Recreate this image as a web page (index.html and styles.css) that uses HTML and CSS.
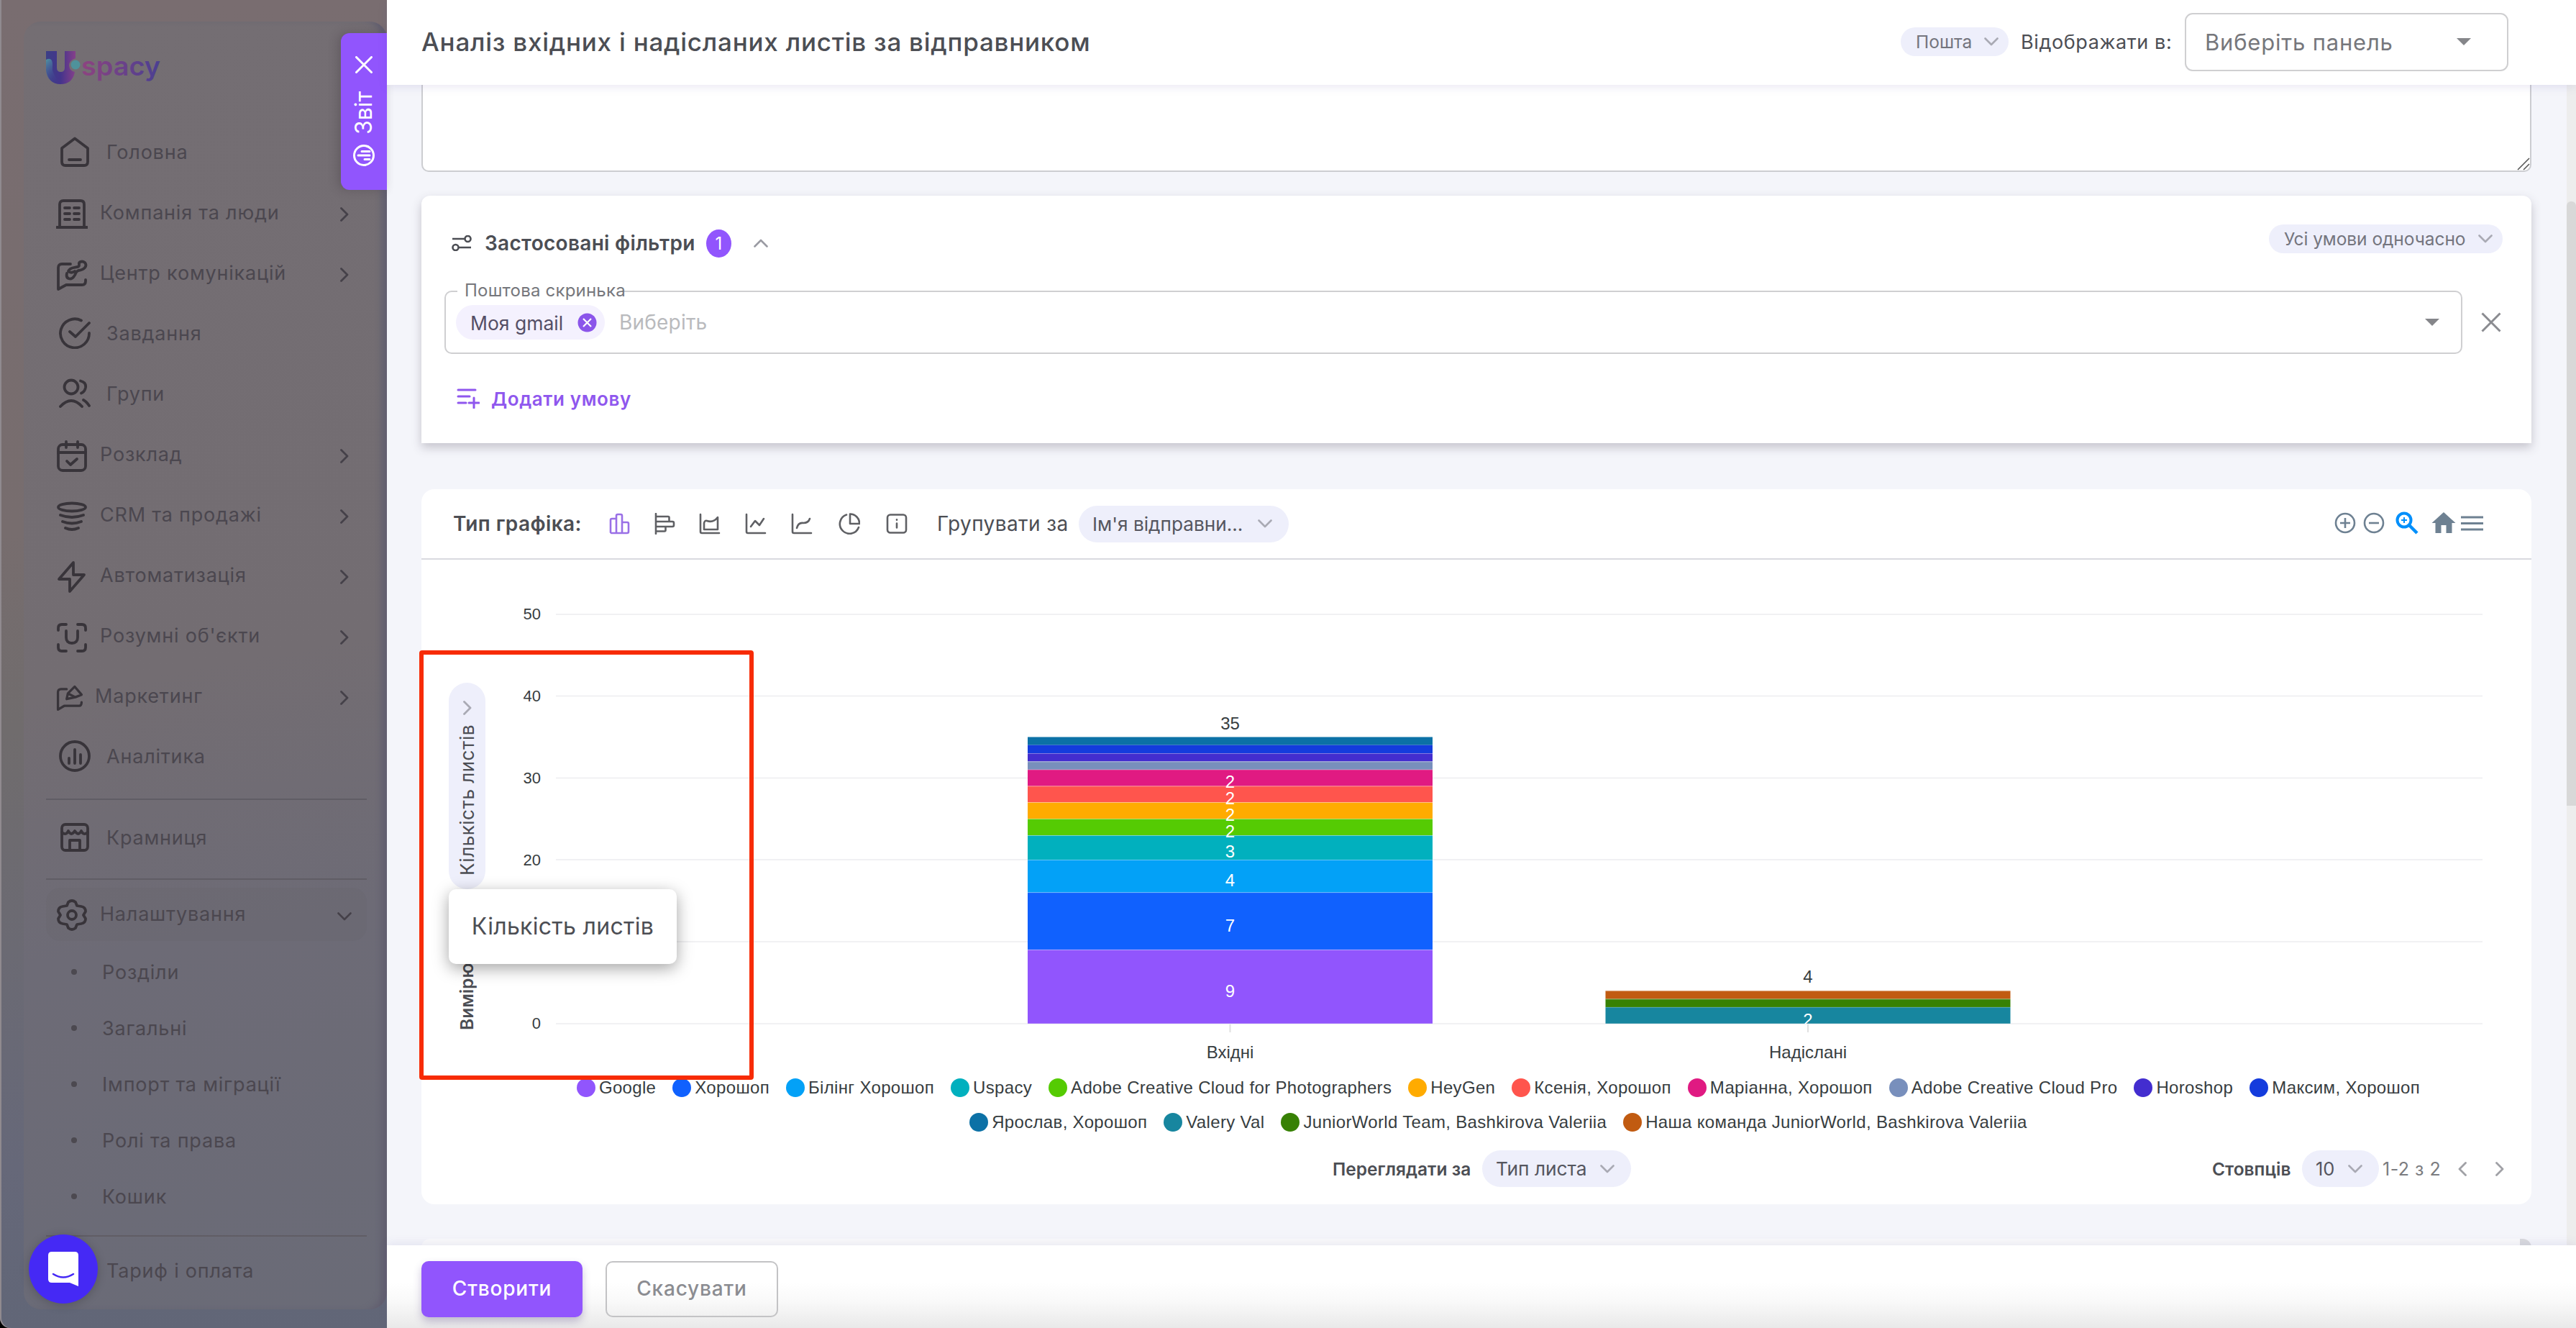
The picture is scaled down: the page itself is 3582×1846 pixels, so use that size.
FILE: index.html
```html
<!DOCTYPE html>
<html lang="uk">
<head>
<meta charset="utf-8">
<title>Аналіз вхідних і надісланих листів за відправником</title>
<link rel="stylesheet" href="styles.css">
</head>
<body>
<svg class="defs" width="0" height="0" aria-hidden="true">
  <symbol id="down" viewBox="0 0 20 12"><path d="M1.5 1.5 10 10l8.500-8.500" fill="none" stroke="currentColor" stroke-width="2.600" stroke-linecap="round" stroke-linejoin="round"/></symbol>
  <symbol id="right" viewBox="0 0 12 20"><path d="M1.500 1.500 10 10 1.500 18.500" fill="none" stroke="currentColor" stroke-width="2.800" stroke-linecap="round" stroke-linejoin="round"/></symbol>
  <symbol id="caret" viewBox="0 0 20 10"><path d="M0 0h20L10 10z" fill="currentColor"/></symbol>
</svg>

<div class="app">
  <aside class="sidebar">
    <div class="panel">
      <svg class="logo" viewBox="0 0 160 48">
        <defs>
          <linearGradient id="lu" x1="0" y1="0" x2="1" y2="0"><stop offset="0" stop-color="#3c3f86"/><stop offset=".5" stop-color="#45348c"/><stop offset="1" stop-color="#86408a"/></linearGradient>
          <linearGradient id="lc" x1="0" y1="0" x2="0.600" y2="1"><stop offset="0" stop-color="#4f95a2"/><stop offset="1" stop-color="#403c9a" stop-opacity="0"/></linearGradient>
          <linearGradient id="lt" x1="0" y1="0" x2="1" y2="0"><stop offset="0" stop-color="#8e4380"/><stop offset="1" stop-color="#4a3f92"/></linearGradient>
        </defs>
        <path d="M0 0h15v23q0 6 5.500 6t5.500-6V0h15v10q-9 3-9 10 1 8 8 9-3 17-20 17T0 26z" fill="url(#lu)"/>
        <path d="M0 12q8-4 9 5v10q3 10 12 18Q0 45 0 26z" fill="url(#lc)"/>
        <circle cx="41" cy="19" r="6.500" fill="#4f929b"/>
        <text x="49" y="34" class="logo-text" fill="url(#lt)" textLength="110" lengthAdjust="spacingAndGlyphs">spacy</text>
      </svg>

      <nav class="nav">
        <a class="item"><svg class="ico" viewBox="0 0 44 44"><path d="M4 17 22 3.500 40 17v19q0 5-5 5H9q-5 0-5-5zM14 33h16"/></svg><span>Головна</span></a>
        <a class="item sub"><svg class="ico" viewBox="0 0 44 44"><path d="M1 40h42M5 39V8q0-5 5-5h24q5 0 5 5v31M12 13h7M25 13h7M12 21h7M25 21h7M12 29h7M25 29h7"/></svg><span>Компанія та люди</span><svg class="arr"><use href="#right"/></svg></a>
        <a class="item sub"><svg class="ico" viewBox="0 0 44 44"><path d="M20 7H8q-5 0-5 5v30l11-6h22q5 0 5-5v-2M15 20c-2 8 6 10 10 4 3-3 1-6 6-8 8-1 13-6 9-11-4-3-9-1-8 3 1 6-12 1-15 9 3 3 6 2 9 0"/></svg><span>Центр комунікацій</span><svg class="arr"><use href="#right"/></svg></a>
        <a class="item"><svg class="ico" viewBox="0 0 44 44"><path d="M31 4.500A20 20 0 1 0 42 22M15 20l8 7L42 8"/></svg><span>Завдання</span></a>
        <a class="item"><svg class="ico" viewBox="0 0 44 44"><circle cx="17" cy="13" r="9.500"/><path d="M2 40q15-16 30 0M30 4.500q8 2 7 9-1 6-6 8M34 31q4 2 8 8"/></svg><span>Групи</span></a>
        <a class="item sub"><svg class="ico" viewBox="0 0 44 44"><rect x="3" y="6" width="38" height="36" rx="6"/><path d="M3 17h38M14 2v8M30 2v8M15 29l5 5 9-8"/></svg><span>Розклад</span><svg class="arr"><use href="#right"/></svg></a>
        <a class="item sub"><svg class="ico" viewBox="0 0 44 44"><ellipse cx="22" cy="9" rx="19" ry="5.500"/><path d="M6 20q16 6 32 0M9 29q13 5 26 0M13 38q9 4 18 0"/></svg><span>CRM та продажі</span><svg class="arr"><use href="#right"/></svg></a>
        <a class="item sub"><svg class="ico" viewBox="0 0 44 44"><path d="M24 2 4 25h15v17L39 19H24z"/></svg><span>Автоматизація</span><svg class="arr"><use href="#right"/></svg></a>
        <a class="item sub"><svg class="ico" viewBox="0 0 44 44"><path d="M3 12V9q0-5 5-5h6M30 4h6q5 0 5 5v3M3 32v4q0 5 5 5h6M30 41h6q5 0 5-5v-4M14 13v9q0 8 8 8t8-8v-9"/></svg><span>Розумні об'єкти</span><svg class="arr"><use href="#right"/></svg></a>
        <a class="item sub mk"><svg class="ico" viewBox="0 0 44 44"><path d="M17 8H8q-5 0-5 5v28l10-6h24q4 0 4-6M17 24l2-9L30 4l11 13-10 4zM19 15l12 6"/></svg><span>Маркетинг</span><svg class="arr"><use href="#right"/></svg></a>
        <a class="item"><svg class="ico" viewBox="0 0 44 44"><circle cx="22" cy="22" r="20"/><path d="M14 25v7M22 13v19M30 20v12"/></svg><span>Аналітика</span></a>
        <hr class="h1">
        <a class="item"><svg class="ico" viewBox="0 0 44 44"><rect x="4" y="4" width="36" height="36" rx="5"/><path d="M4 15q6 5 9-2 4 8 9 0 5 8 9 0 3 7 9 2M15 39V26h14v13"/></svg><span>Крамниця</span></a>
        <hr class="h2">
        <a class="item sub open"><svg class="ico" viewBox="0 0 44 44"><path d="M17 4q5-4 10 0l2 5 6 1q6 1 6 7l-3 5 3 5q0 6-6 7l-6 1-2 5q-5 4-10 0l-2-5-6-1q-6-1-6-7l3-5-3-5q0-6 6-7l6-1z"/><circle cx="22" cy="22" r="6"/></svg><span>Налаштування</span><svg class="arr dn"><use href="#down"/></svg></a>
        <a class="leaf"><i></i>Розділи</a>
        <a class="leaf"><i></i>Загальні</a>
        <a class="leaf"><i></i>Імпорт та міграції</a>
        <a class="leaf"><i></i>Ролі та права</a>
        <a class="leaf"><i></i>Кошик</a>
        <hr class="h3">
        <a class="item last"><span>Тариф і оплата</span></a>
      </nav>
    </div>
    <div class="tab">
      <svg width="24" height="24" viewBox="0 0 24 24"><path d="M1.500 1.500l21 21M22.500 1.500l-21 21"/></svg>
      <span>Звіт</span>
      <svg width="30" height="30" viewBox="0 0 30 30"><circle cx="15" cy="15" r="13.500"/><path d="M12 9.500h11M7 15h16M16 20.500h7"/></svg>
    </div>
    <div class="chat"><svg width="42" height="48" viewBox="0 0 42 48"><path d="M5 0h32q5 0 5 5v43l-12-5H5q-5 0-5-5V5q0-5 5-5z" fill="#fff"/><path d="M7 31q14 9 28 0" fill="none" stroke="#4529f5" stroke-width="2.500" stroke-linecap="round"/></svg></div>
  </aside>

  <main class="drawer">
    <header class="head">
      <h1>Аналіз вхідних і надісланих листів за відправником</h1>
      <div class="chip small mail"><span>Пошта</span><svg class="cv"><use href="#down"/></svg></div>
      <span class="show">Відображати в:</span>
      <div class="select"><span>Виберіть панель</span><svg class="caret"><use href="#caret"/></svg></div>
    </header>

    <section class="scroll">
      <div class="content">
        <div class="textarea"><svg width="18" height="18" viewBox="0 0 18 18"><path d="M1 17 17 1M9 17l8-8" stroke="#555" stroke-width="1.600"/></svg></div>

        <div class="card filters">
          <div class="f-head">
            <svg class="f-ico" viewBox="0 0 28 22"><path d="M1 5h17M10 17h17"/><circle cx="22.500" cy="5" r="4"/><circle cx="5.500" cy="17" r="4"/></svg>
            <b>Застосовані фільтри</b>
            <span class="badge">1</span>
            <svg class="cv up"><use href="#down"/></svg>
            <div class="chip small cond"><span>Усі умови одночасно</span><svg class="cv"><use href="#down"/></svg></div>
          </div>
          <div class="f-row">
            <div class="field">
              <span class="legend">Поштова скринька</span>
              <div class="tag"><span>Моя gmail</span><svg width="27" height="27" viewBox="0 0 27 27"><circle cx="13.500" cy="13.500" r="13" fill="#8b55ea"/><path d="M8 8l11 11M19 8 8 19" stroke="#fff" stroke-width="2.200"/></svg></div>
              <span class="ph">Виберіть</span>
              <svg class="caret"><use href="#caret"/></svg>
            </div>
            <svg class="remove" viewBox="0 0 28 28"><path d="M1.500 1.500l25 25M26.500 1.500l-25 25"/></svg>
          </div>
          <div class="add"><svg viewBox="0 0 32 28"><path d="M2 2h24M2 11h16M2 20h11M17 20h14M24 13v14"/></svg><span>Додати умову</span></div>
        </div>

        <div class="card chart">
          <div class="c-head">
            <b>Тип графіка:</b>
            <div class="types">
              <svg class="on" viewBox="0 0 30 30"><path d="M2 27V10q0-2 2-2h6v20H3M10 28V4q0-2 2-2h4q2 0 2 2v24zM18 13h7q2 0 2 2v11q0 2-2 2h-7"/></svg>
              <svg viewBox="0 0 30 30"><path d="M2 1v28M2 5h17q1.500 0 1.500 1.500V12H2M2 12h23q2 0 2 2v3q0 2-2 2H2M2 25.500h12q1.500 0 1.500-1.500v-5"/></svg>
              <svg viewBox="0 0 30 30"><path d="M2 2v24q0 2 2 2h24M7 23V14q1-4 4-3 9 3 15-5v17z"/></svg>
              <svg class="s1" viewBox="0 0 30 30"><path d="M2 2v24q0 2 2 2h24M8 19l6-8 6 6 6-9"/></svg>
              <svg class="s2" viewBox="0 0 30 30"><path d="M2 2v24q0 2 2 2h24M8 21q2-8 9-7 7 0 9-6"/></svg>
              <svg class="s3" viewBox="0 0 30 30"><path d="M11 2.500A13.500 13.500 0 1 0 28 20M16 1.500A13 13 0 0 1 29 15H16z"/></svg>
              <svg class="s4" viewBox="0 0 30 30"><rect x="2" y="2.500" width="26" height="25" rx="4"/><path d="M15 14.500v6M15 9.300v.4"/></svg>
            </div>
            <span class="grp">Групувати за</span>
            <div class="chip big by"><span>Ім'я відправни...</span><svg class="cv"><use href="#down"/></svg></div>
            <svg class="tools" viewBox="0 0 222 32" width="222" height="32">
              <g fill="none" stroke="#6e8192" stroke-width="2.600"><circle cx="29" cy="15" r="13"/><path d="M29 8v14M22 15h14"/><circle cx="69" cy="15" r="13"/><path d="M62 15h14"/></g>
              <g fill="none" stroke="#008ffb" stroke-width="4"><circle cx="111" cy="11" r="9.500"/><path d="M118 18l11 11" stroke-width="4.500"/><path d="M111 7v8M107 11h8" stroke-width="2"/></g>
              <path d="M166 0l16.500 15h-5v14h-8V18h-7v11h-8V15h-5z" fill="#6e8192"/>
              <path d="M190 7h31M190 15.500h31M190 24h31" stroke="#6e8192" stroke-width="3"/>
            </svg>
          </div>

          <div class="c-body">
            <div class="axis">
              <div class="pill"><svg class="pv"><use href="#right"/></svg><span>Кількість листів</span></div>
              <b>Вимірюв.</b>
            </div>
            <svg class="plot" viewBox="714 778 2806 712">
              <defs><clipPath id="bar2"><rect x="2232" y="1377" width="564" height="46"/></clipPath></defs>
              <path class="grid" d="M773 854H3452M773 967.500H3452M773 1081.500H3452M773 1195H3452M773 1309H3452M773 1423H3452"/>
              <path class="tick" d="M1710.500 1424v11M2514 1424v11"/>
              <g class="y"><text x="752" y="861">50</text><text x="752" y="975">40</text><text x="752" y="1089">30</text><text x="752" y="1203">20</text><text x="752" y="1317">10</text><text x="752" y="1430">0</text></g>
              <g class="seg">
                <rect x="1429" y="1024.300" width="563" height="11.400" fill="#0c71a6"/>
                <rect x="1429" y="1035.700" width="563" height="11.400" fill="#143cdd"/>
                <rect x="1429" y="1047.100" width="563" height="11.400" fill="#432dcf"/>
                <rect x="1429" y="1058.500" width="563" height="11.400" fill="#788fbc"/>
                <rect x="1429" y="1069.900" width="563" height="22.800" fill="#e01a82"/>
                <rect x="1429" y="1092.700" width="563" height="22.800" fill="#ff554d"/>
                <rect x="1429" y="1115.500" width="563" height="22.800" fill="#ffab00"/>
                <rect x="1429" y="1138.300" width="563" height="23" fill="#55cb03"/>
                <rect x="1429" y="1161.300" width="563" height="34" fill="#01b0be"/>
                <rect x="1429" y="1195.200" width="563" height="45.500" fill="#03a1f7"/>
                <rect x="1429" y="1240.700" width="563" height="79.600" fill="#1061fe"/>
                <rect x="1429" y="1320.300" width="563" height="102.500" fill="#9155fd"/>
                <rect x="2232.500" y="1377.200" width="563" height="11.400" fill="#c15b11"/>
                <rect x="2232.500" y="1388.600" width="563" height="11.400" fill="#378104"/>
                <rect x="2232.500" y="1400" width="563" height="22.800" fill="#17869f"/>
              </g>
              <path class="edge" d="M1429 1024.500h563M1429 1047.500h563M1429 1059h563M1429 1070h563M1429 1093h563M1429 1115.500h563M1429 1138.500h563M1429 1161.500h563M1429 1195.500h563M1429 1240.700h563M1429 1320.300h563M2232.500 1377.700h563M2232.500 1389h563M2232.500 1400.300h563"/>
              <g class="val">
                <text x="1710.500" y="1095">2</text><text x="1710.500" y="1118">2</text><text x="1710.500" y="1141">2</text><text x="1710.500" y="1164">2</text>
                <text x="1710.500" y="1192">3</text><text x="1710.500" y="1232">4</text><text x="1710.500" y="1295">7</text><text x="1710.500" y="1386">9</text>
                <g clip-path="url(#bar2)"><text x="2514" y="1425.500">2</text></g>
              </g>
              <g class="cat"><text x="1710.500" y="1014">35</text><text x="2514" y="1366">4</text><text x="1710.500" y="1471">Вхідні</text><text x="2514" y="1471">Надіслані</text></g>
            </svg>
          </div>

          <div class="leg">
            <div><span><i class="a1"></i>Google</span><span><i class="a2"></i>Хорошоп</span><span><i class="a3"></i>Білінг Хорошоп</span><span><i class="a4"></i>Uspacy</span><span><i class="a5"></i>Adobe Creative Cloud for Photographers</span><span><i class="a6"></i>HeyGen</span><span><i class="a7"></i>Ксенія, Хорошоп</span><span><i class="a8"></i>Маріанна, Хорошоп</span><span><i class="a9"></i>Adobe Creative Cloud Pro</span><span><i class="a10"></i>Horoshop</span><span><i class="a11"></i>Максим, Хорошоп</span></div>
            <div><span><i class="a12"></i>Ярослав, Хорошоп</span><span><i class="a13"></i>Valery Val</span><span><i class="a14"></i>JuniorWorld Team, Bashkirova Valeriia</span><span><i class="a15"></i>Наша команда JuniorWorld, Bashkirova Valeriia</span></div>
          </div>

          <div class="c-foot">
            <b class="view">Переглядати за</b>
            <div class="chip big type"><span>Тип листа</span><svg class="cv"><use href="#down"/></svg></div>
            <b class="cols">Стовпців</b>
            <div class="chip big ten"><span>10</span><svg class="cv"><use href="#down"/></svg></div>
            <span class="range">1-2 з 2</span>
            <svg class="pg prev"><use href="#right"/></svg>
            <svg class="pg"><use href="#right"/></svg>
          </div>
          <div class="tip">Кількість листів</div>
          <div class="mark"></div>
        </div>

        <div class="card next"><i></i></div>
      </div>
      <div class="track"><i></i></div>
    </section>

    <footer class="foot">
      <button class="primary">Створити</button>
      <button class="ghost">Скасувати</button>
    </footer>
  </main>
</div>
</body>
</html>
```
FILE: styles.css
```css
* { box-sizing: border-box; }
html, body { margin: 0; height: 100%; background: #000; overflow: hidden; }
body { font-family: Inter, "Noto Sans", sans-serif; font-size: 27px; color: #4c4e54; white-space: nowrap; }
.defs { position: absolute; }
svg { flex: none; display: block; }
b { font-weight: 600; }
.app { display: flex; width: 3582px; height: 1846px; background: linear-gradient(90deg, #000 0 20px, #fff 20px); }

/* sidebar under the dimmed backdrop */
.sidebar { position: relative; width: 538px; flex: none; padding: 30px 0 0 33px; background: linear-gradient(180deg, #796d70 0, #776d6e 40%, #706c6d 55%, #666879 88%, #616677 100%); box-shadow: inset 2px 0 #908a8f; border-bottom-left-radius: 14px; }
.panel { width: 505px; height: 1790px; padding: 41px 28px 0 31px; border-radius: 24px; background: linear-gradient(170deg, #746e73 0, #736d72 50%, #6d6b76 70%, #6a6b77 100%); box-shadow: inset -11px 0 8px -3px #625f70; }
.logo { width: 160px; height: 48px; overflow: visible; }
.logo-text { font: 600 37px Inter, sans-serif; }
.nav { display: flex; flex-direction: column; margin-top: 50px; color: #4b474f; letter-spacing: .8px; }
.item { display: flex; align-items: center; height: 84px; padding: 0 16px 0 18px; flex: none; }
.item span { margin-left: 22px; flex: 1; }
.ico { width: 44px; height: 44px; fill: none; stroke: #38343a; stroke-width: 3.800; stroke-linecap: round; stroke-linejoin: round; }
.item.sub { padding-left: 14px; }
.item.sub span { margin-left: 17px; }
.item.sub .ico, .item.sub .arr { margin-top: 6px; }
.item.mk .ico { width: 38px; height: 38px; }
.item.mk span { margin-left: 16px; }
.arr { width: 12px; height: 20px; margin-right: 9px; color: #454149; }
.arr.dn { width: 20px; height: 12px; margin-right: 5px; }
.nav hr { width: 446px; height: 2px; margin: 0; border: 0; background: #605d65; flex: none; }
.nav .h1 { margin: 17px 0 10px; }
.nav .h2 { margin: 15px 0 11px; }
.nav .h3 { margin: 15px 0 5px; }
.item.open { height: 74px; border-radius: 20px; background: rgba(80, 80, 90, .07); margin-bottom: 4px; }
.item.open .ico { margin-top: 2px; }
.item.open span { margin-top: -2px; }
.leaf { display: flex; align-items: center; height: 78px; padding-left: 35px; flex: none; }
.leaf i { width: 8px; height: 8px; border-radius: 50%; background: #4c4950; margin-right: 35px; }
.item.last span { margin-left: 66px; }
.tab { position: absolute; left: 474px; top: 46px; width: 64px; height: 218px; border-radius: 12px 0 0 12px; background: #9155fd; color: #fff; display: flex; flex-direction: column; align-items: center; padding-top: 32px; box-shadow: -4px 0 14px rgba(60, 50, 60, .3); }
.tab svg { fill: none; stroke: #fff; stroke-width: 3; stroke-linecap: round; }
.tab span { writing-mode: vertical-rl; transform: rotate(180deg); height: 61px; margin: 24px 0 14px; font-size: 32px; font-weight: 400; line-height: 34px; }
.chat { position: absolute; left: 40px; top: 1716px; width: 96px; height: 96px; border-radius: 50%; background: #4529f5; display: flex; align-items: center; justify-content: center; box-shadow: 0 2px 14px rgba(0, 0, 0, .2); }

/* report drawer */
.drawer { flex: 1; min-width: 0; display: flex; flex-direction: column; background: #f4f5fa; }
.head { position: relative; z-index: 2; height: 118px; flex: none; background: #fff; display: flex; align-items: center; padding: 0 94px 0 48px; box-shadow: 0 3px 12px rgba(90, 80, 160, .13); }
.head h1 { flex: 1; margin: 0; font-size: 35px; font-weight: 500; letter-spacing: .76px; }
.head > * { transform: translateY(-1px); }
.chip { display: flex; align-items: center; justify-content: space-between; background: #eeeffb; color: #55565f; flex: none; }
.chip.small { height: 40px; border-radius: 20px; padding: 0 14px 0 21px; font-size: 24.500px; color: #74757e; }
.chip.big { height: 51px; border-radius: 26px; padding: 0 23px 0 19px; }
.cv { width: 20px; height: 12px; color: #a9aab4; }
.mail { width: 150px; }
.show { width: 245px; padding-left: 17px; font-size: 27px; letter-spacing: .6px; }
.select { width: 450px; height: 81px; border: 2px solid #cfcfd1; border-radius: 11px; display: flex; align-items: center; justify-content: space-between; padding: 0 50px 0 26px; font-size: 31px; letter-spacing: .8px; color: #76777c; }
.caret { width: 20px; height: 10px; color: #85868a; }

.scroll { flex: 1; min-height: 0; overflow: hidden; display: flex; justify-content: space-between; }
.content { width: 2934px; margin-left: 48px; }
.textarea { height: 121px; border: 2px solid #cccdd1; border-top: 0; border-radius: 0 0 10px 10px; background: #fff; display: flex; justify-content: flex-end; align-items: flex-end; }
.card { background: #fff; border-radius: 12px; }
.filters { height: 344px; margin-top: 33px; border-radius: 12px 12px 0 0; box-shadow: 0 6px 14px rgba(60, 55, 75, .26); padding: 40px 40px 0 32px; }
.f-head { display: flex; align-items: center; height: 52px; padding-left: 10px; }
.f-ico { width: 28px; height: 22px; fill: none; stroke: #4c4e54; stroke-width: 2.600; margin-right: 18px; }
.f-head b { width: 308px; font-size: 28px; letter-spacing: .3px; }
.badge { width: 35px; height: 39px; border-radius: 50%; background: #9155fd; color: #fff; font-size: 24px; line-height: 39px; text-align: center; }
.up { transform: rotate(180deg); margin-left: 31px; color: #9a9ba3; }
.cond { width: 325px; margin: -12px 0 0 auto; letter-spacing: -.05px; }
.f-row { display: flex; align-items: center; margin-top: 40px; }
.field { position: relative; width: 2806px; height: 88px; border: 2px solid #cfcfd1; border-radius: 10px; display: flex; align-items: center; padding: 0 30px 0 14px; }
.legend { position: absolute; left: 16px; top: -19px; line-height: 34px; padding-left: 10px; width: 234px; background: linear-gradient(#fff, #fff) 0 0 / 228px 100% no-repeat; font-size: 24px; letter-spacing: .2px; color: #76777c; }
.tag { width: 207px; height: 48px; border-radius: 24px; background: #f4f1fe; display: flex; align-items: center; justify-content: space-between; padding: 2px 11px 0 20px; font-size: 26.500px; color: #544f66; }
.tag svg { margin-top: -2px; }
.ph { flex: 1; padding-left: 20px; font-size: 28px; letter-spacing: .2px; color: #b9babd; }
.remove { width: 28px; height: 28px; margin-left: 26px; stroke: #8a8b90; stroke-width: 3; }
.add { display: flex; align-items: center; height: 60px; margin: 32px 0 0 17px; color: #8f57ee; font-size: 26px; font-weight: 600; letter-spacing: .6px; }
.add svg { width: 32px; height: 28px; margin-right: 16px; fill: none; stroke: #8f57ee; stroke-width: 3; stroke-linecap: round; }

.chart { position: relative; height: 994px; margin-top: 64px; border-radius: 18px; }
.c-head { display: flex; align-items: center; height: 98px; border-bottom: 2px solid #d9dae0; padding-left: 44px; }
.c-head b { width: 217px; font-size: 28px; letter-spacing: .4px; }
.types { display: flex; width: 456px; gap: 32.500px; }
.types svg { width: 30px; height: 30px; fill: none; stroke: #5f6064; stroke-width: 2.600; stroke-linecap: round; stroke-linejoin: round; }
.types .on { stroke: #9a70e6; }
.types .s1 { margin-left: 1px; }
.types .s2 { margin-left: 2px; }
.types .s3 { margin-left: 3px; }
.types .s4 { margin-left: 4px; }
.grp { width: 197px; font-size: 28px; letter-spacing: .4px; }
.by { width: 292px; font-size: 26.200px; }
.tools { margin-left: auto; margin-right: 66px; overflow: visible; }
.c-body { display: flex; height: 712px; }
.axis { width: 128px; padding: 171px 0 0 38px; display: flex; flex-direction: column; }
.pill { width: 51px; height: 287px; border-radius: 26px; background: #eeeffb; display: flex; flex-direction: column; align-items: center; padding-top: 25px; }
.pv { width: 12px; height: 20px; color: #a9aab4; }
.pill span, .axis b { writing-mode: vertical-rl; transform: rotate(180deg); line-height: 51px; font-size: 26px; letter-spacing: .5px; }
.pill span { margin-top: 16px; height: 207px; }
.axis b { height: 140px; margin-top: 56px; font-size: 24.500px; letter-spacing: 0; }
.plot { width: 2806px; height: 712px; }
.plot text { font-family: "Liberation Sans", Arial, sans-serif; font-size: 24px; fill: #373d3f; text-anchor: middle; }
.plot .y text { font-size: 22px; text-anchor: end; }
.plot .val text { fill: #fff; }
.grid { stroke: #f1f1f3; stroke-width: 2; }
.tick { stroke: #e0e0e0; stroke-width: 2; }
.edge { stroke: #fff; stroke-opacity: .3; stroke-width: 1; }
.leg div { display: flex; justify-content: center; height: 48px; padding-left: 61px; align-items: center; gap: 23px; font: 24px "Liberation Sans", Arial, sans-serif; letter-spacing: .33px; color: #373d3f; }
.leg { margin-top: -2px; }
.leg span { display: flex; align-items: center; }
.leg i { width: 26px; height: 26px; border-radius: 50%; margin-right: 5px; }
.a1 { background: #9155fd; } .a2 { background: #1061fe; } .a3 { background: #03a1f7; } .a4 { background: #01b0be; } .a5 { background: #55cb03; }
.a6 { background: #ffab00; } .a7 { background: #ff554d; } .a8 { background: #e01a82; } .a9 { background: #788fbc; } .a10 { background: #432dcf; }
.a11 { background: #143cdd; } .a12 { background: #0c71a6; } .a13 { background: #17869f; } .a14 { background: #378104; } .a15 { background: #c15b11; }
.c-foot { display: flex; align-items: center; height: 51px; margin-top: 15px; padding-left: 1267px; }
.c-foot b { font-size: 24.500px; }
.view { width: 208px; }
.type { width: 207px; font-size: 26.300px; }
.cols { width: 125px; margin-left: 808px; }
.ten { width: 107px; font-size: 25.500px; }
.range { width: 110px; padding-left: 5px; font-size: 25px; letter-spacing: .5px; color: #7b7c80; }
.pg { width: 12px; height: 20px; color: #a0a1a6; }
.prev { transform: rotate(180deg); margin-right: 40px; }
.tip { position: absolute; left: 38px; top: 556px; width: 317px; height: 104px; border-radius: 10px; background: #fff; box-shadow: 0 6px 22px rgba(0, 0, 0, .36); line-height: 104px; text-align: center; font-size: 32px; letter-spacing: .3px; }
.mark { position: absolute; left: -3px; top: 224px; width: 465px; height: 597px; border: 6px solid #f72b05; border-radius: 4px; }
.next { height: 40px; margin-top: 48px; display: flex; justify-content: flex-end; overflow: hidden; background: #fafafb; }
.next i { width: 16px; background: #d9dade; }
.track { width: 13px; background: #ededed; padding-top: 162px; }
.track i { display: block; height: 840px; border-radius: 6px 6px 0 0; background: #d8d8d8; }

.foot { position: relative; height: 115px; flex: none; display: flex; align-items: flex-start; gap: 32px; padding: 22px 0 0 48px; background: linear-gradient(180deg, #fff 45%, #f9f9f9 68%, #e9e9e9 100%); box-shadow: 0 -3px 12px rgba(90, 80, 160, .1); }
.foot button { height: 78px; border-radius: 10px; font: 500 28px Inter, sans-serif; letter-spacing: .8px; padding: 0 0 2px; }
.primary { width: 224px; border: 0; background: #9155fd; color: #fff; box-shadow: 0 6px 12px rgba(80, 60, 130, .3); }
.ghost { width: 240px; border: 2px solid #c3c3c5; background: transparent; color: #8b8c91; }
```
